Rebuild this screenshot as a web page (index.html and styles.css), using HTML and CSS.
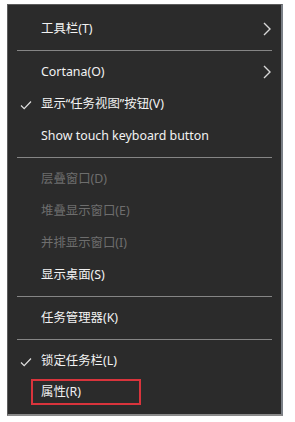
FILE: index.html
```html
<!DOCTYPE html>
<html lang="zh-CN">
<head>
<meta charset="utf-8">
<link rel="stylesheet" href="styles.css">
</head>
<body>
<div class="menu">
  <div class="item"><span class="label">工具栏(T)</span><svg class="arrow" viewBox="0 0 10 14" width="10" height="14"><path d="M2 1 L8 7 L2 13" fill="none" stroke="#d8d8d8" stroke-width="1.4"/></svg></div>
  <div class="sep"></div>
  <div class="item"><span class="label">Cortana(O)</span><svg class="arrow" viewBox="0 0 10 14" width="10" height="14"><path d="M2 1 L8 7 L2 13" fill="none" stroke="#d8d8d8" stroke-width="1.4"/></svg></div>
  <div class="item"><svg class="check" viewBox="0 0 12 10" width="12" height="10"><path d="M1 5.5 L4.2 8.7 L11 1.5" fill="none" stroke="#e0e0e0" stroke-width="1.2"/></svg><span class="label">显示“任务视图”按钮(V)</span></div>
  <div class="item"><span class="label">Show touch keyboard button</span></div>
  <div class="sep"></div>
  <div class="item disabled"><span class="label">层叠窗口(D)</span></div>
  <div class="item disabled"><span class="label">堆叠显示窗口(E)</span></div>
  <div class="item disabled"><span class="label">并排显示窗口(I)</span></div>
  <div class="item"><span class="label">显示桌面(S)</span></div>
  <div class="sep"></div>
  <div class="item"><span class="label">任务管理器(K)</span></div>
  <div class="sep"></div>
  <div class="item"><svg class="check" viewBox="0 0 12 10" width="12" height="10"><path d="M1 5.5 L4.2 8.7 L11 1.5" fill="none" stroke="#e0e0e0" stroke-width="1.2"/></svg><span class="label">锁定任务栏(L)</span></div>
  <div class="item last"><span class="label highlight">属性(R)</span></div>
</div>
</body>
</html>
```
FILE: styles.css
```css
html, body {
  margin: 0;
  padding: 0;
  background: #ffffff;
}
body {
  padding: 4px 0 0 7px;
  font-family: "Noto Sans", "Noto Sans CJK SC", sans-serif;
  font-size: 12.4px;
}
.menu {
  width: 276px;
  box-sizing: border-box;
  background: #2b2b2b;
  border: 1px solid #5c5c5c;
  border-right: 2px solid #7a7f86;
  border-bottom: 2px solid #8a8a8a;
  padding: 8px 0 7px 0;
  display: flex;
  flex-direction: column;
}
.item {
  position: relative;
  height: 32px;
  display: flex;
  align-items: center;
  padding-left: 33px;
  color: #f2f2f2;
}
.item.last {
  height: 30px;
}
.item.disabled {
  color: #6e6e6e;
}
.label {
  line-height: 20px;
}
.check {
  position: absolute;
  left: 12px;
  top: 12px;
}
.arrow {
  position: absolute;
  right: 9px;
  top: 9px;
}
.sep {
  height: 11px;
  display: flex;
  align-items: center;
  padding: 0 9px;
}
.sep::before {
  content: "";
  flex: 1;
  height: 1px;
  background: #858585;
}
.highlight {
  margin-left: -10px;
  padding: 1px 34px 1px 8px;
  width: 64px;
  border: 2px solid #d9343c;
}
```
